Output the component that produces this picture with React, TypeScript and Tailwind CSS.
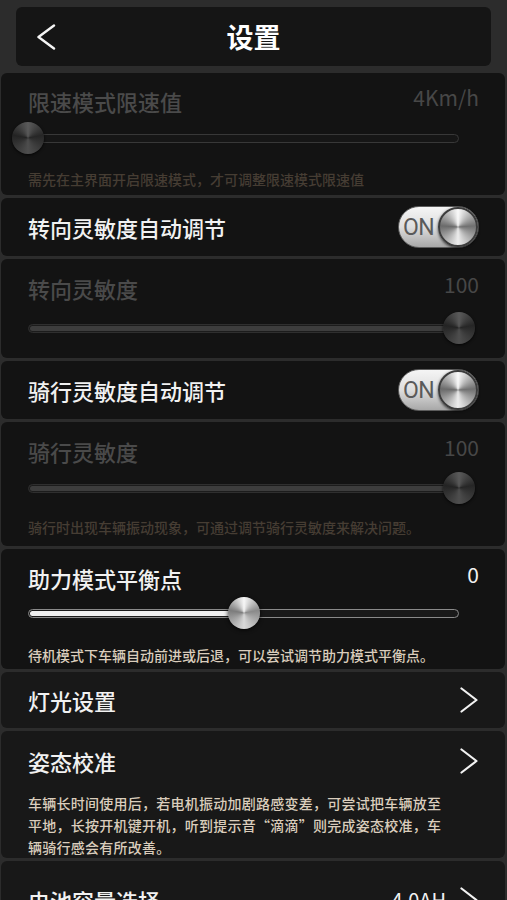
import React from "react";

type SliderProps = {
  fill: string;
  trackBg: string;
  trackBorder: string;
  thumbLeft: string;
  thumb: string;
};

function Slider({ fill, trackBg, trackBorder, thumbLeft, thumb }: SliderProps) {
  return (
    <div className="relative w-[431px] h-[32px] flex items-center">
      <div className={`w-full h-[9px] rounded-full border ${trackBorder} ${trackBg} p-[1px] flex`}>
        <div className={`h-full rounded-full ${fill}`} />
      </div>
      <div className={`absolute top-0 ${thumbLeft} -translate-x-1/2 w-[32px] h-[32px] rounded-full ${thumb}`} />
    </div>
  );
}

const thumbOn =
  "bg-[conic-gradient(#f7f7f7,#8a8a8a_22%,#d9d9d9_50%,#7c7c7c_78%,#f7f7f7)] shadow-[0_1px_4px_rgba(0,0,0,0.8)]";
const thumbOff =
  "bg-[conic-gradient(#5a5a5a,#262626_22%,#4e4e4e_50%,#232323_78%,#5a5a5a)] shadow-[0_1px_3px_rgba(0,0,0,0.8)]";

function Toggle() {
  return (
    <div className="w-[81px] h-[42px] shrink-0 rounded-full bg-linear-to-b from-[#f5f5f5] via-[#dedede] to-[#a8a8a8] border border-[#5c5c5c] flex items-center justify-between">
      <span className="pl-[4px] font-['Roboto',sans-serif] text-[23px] leading-none text-[#5a5a5a] tracking-[-0.5px]">
        ON
      </span>
      <div className="w-[40px] h-[40px] rounded-full border-2 border-[#3c3c3c] bg-[conic-gradient(#fafafa,#707070_24%,#ededed_50%,#6a6a6a_76%,#fafafa)] shadow-[0_1px_3px_rgba(0,0,0,0.7)]" />
    </div>
  );
}

function Chevron() {
  return (
    <svg width="18" height="26" viewBox="0 0 18 26" fill="none">
      <polyline points="1.5,1.5 16.5,13 1.5,24.5" stroke="#f2f2f2" strokeWidth="2.2" strokeLinecap="round" strokeLinejoin="round" />
    </svg>
  );
}

const card = "ml-[1px] mr-[2px] rounded-md bg-[#131313] pl-[27px] pr-[26px]";
const labelOn = "text-[22px] leading-[28px] font-medium text-[#f1f1f1]";
const labelOff = "text-[22px] leading-[28px] font-medium text-[#4a4a4a]";
const valueOff = "text-[21px] leading-[20px] text-[#474747]";
const valueOn = "text-[21px] leading-[20px] text-[#f1f1f1]";
const hintOff = "text-[14px] leading-[20px] font-medium text-[#463d33]";
const hintOn = "text-[14px] leading-[20px] font-medium text-[#dacdbc]";

export default function App() {
  return (
    <div className="w-full h-[900px] overflow-hidden bg-[#2c2c2c] pt-[7px] font-['Noto_Sans_CJK_SC','Noto_Sans',sans-serif]">
      <div className="mx-4 h-[59px] rounded-md bg-[#151515] grid grid-cols-[70px_1fr_70px] items-center">
        <div className="pl-[21px] flex items-center">
          <svg width="19" height="26" viewBox="0 0 19 26" fill="none">
            <polyline points="17,1.5 1.5,13 17,24.5" stroke="#f5f5f5" strokeWidth="2.4" strokeLinecap="round" strokeLinejoin="round" />
          </svg>
        </div>
        <div className="text-center text-[27px] font-bold text-white leading-none">设置</div>
        <div />
      </div>

      <div className="mt-[7px] flex flex-col gap-[3px]">
        {/* Card 1 */}
        <div className={`${card} pt-[14px] pb-[6px] flex flex-col`}>
          <div className="flex justify-between items-start">
            <span className={labelOff}>限速模式限速值</span>
            <span className={valueOff}>4Km/h</span>
          </div>
          <div className="mt-[7px]">
            <Slider fill="w-0 bg-[#3a3a3a]" trackBg="bg-[#161616]" trackBorder="border-[#383838]" thumbLeft="left-0" thumb={thumbOff} />
          </div>
          <div className={`mt-[15px] ${hintOff}`}>需先在主界面开启限速模式，才可调整限速模式限速值</div>
        </div>

        {/* Card 2 */}
        <div className={`${card} h-[58px] shrink-0 flex items-center justify-between`}>
          <span className={labelOn}>转向灵敏度自动调节</span>
          <Toggle />
        </div>

        {/* Card 3 */}
        <div className={`${card} pt-[15px] pb-[14px] flex flex-col`}>
          <div className="flex justify-between items-start">
            <span className={labelOff}>转向灵敏度</span>
            <span className={valueOff}>100</span>
          </div>
          <div className="mt-[10px]">
            <Slider fill="w-full bg-[#3d3d3d]" trackBg="bg-[#1c1c1c]" trackBorder="border-[#2f2f2f]" thumbLeft="left-full" thumb={thumbOff} />
          </div>
        </div>

        {/* Card 4 */}
        <div className={`${card} h-[58px] shrink-0 flex items-center justify-between`}>
          <span className={labelOn}>骑行灵敏度自动调节</span>
          <Toggle />
        </div>

        {/* Card 5 */}
        <div className={`${card} pt-[15px] pb-[9px] flex flex-col`}>
          <div className="flex justify-between items-start">
            <span className={labelOff}>骑行灵敏度</span>
            <span className={valueOff}>100</span>
          </div>
          <div className="mt-[7px]">
            <Slider fill="w-full bg-[#3d3d3d]" trackBg="bg-[#1c1c1c]" trackBorder="border-[#2f2f2f]" thumbLeft="left-full" thumb={thumbOff} />
          </div>
          <div className={`mt-[13px] ${hintOff}`}>骑行时出现车辆振动现象，可通过调节骑行灵敏度来解决问题。</div>
        </div>

        {/* Card 6 */}
        <div className={`${card} pt-[15px] pb-[4px] flex flex-col`}>
          <div className="flex justify-between items-start">
            <span className={labelOn}>助力模式平衡点</span>
            <span className={valueOn}>0</span>
          </div>
          <div className="mt-[5px]">
            <Slider fill="w-1/2 bg-[#efefef]" trackBg="bg-[#191919]" trackBorder="border-[#8a8a8a]" thumbLeft="left-1/2" thumb={thumbOn} />
          </div>
          <div className={`mt-[16px] ${hintOn}`}>待机模式下车辆自动前进或后退，可以尝试调节助力模式平衡点。</div>
        </div>

        {/* Card 7 */}
        <div className={`${card} h-[56px] shrink-0 flex items-center justify-between bg-[#181818]`}>
          <span className={labelOn}>灯光设置</span>
          <div className="pr-[1px]">
            <Chevron />
          </div>
        </div>

        {/* Card 8 */}
        <div className={`${card} pt-[16px] pb-0 flex flex-col bg-[#181818]`}>
          <div className="flex justify-between items-center">
            <span className={labelOn}>姿态校准</span>
            <div className="pr-[1px]">
              <Chevron />
            </div>
          </div>
          <div className="mt-[17px] text-[14px] leading-[22px] font-medium text-[#dacdbc] tracking-[0.25px]">
            车辆长时间使用后，若电机振动加剧路感变差，可尝试把车辆放至
            <br />
            平地，长按开机键开机，听到提示音“滴滴”则完成姿态校准，车
            <br />
            辆骑行感会有所改善。
          </div>
        </div>

        {/* Card 9 */}
        <div className={`${card} pt-[25px] h-[90px] shrink-0 flex flex-col bg-[#181818]`}>
          <div className="flex justify-between items-center">
            <span className={labelOn}>电池容量选择</span>
            <div className="flex items-center gap-[14px] pr-[1px]">
              <span className="text-[20px] text-[#f1f1f1] leading-none">4.0AH</span>
              <Chevron />
            </div>
          </div>
        </div>
      </div>
    </div>
  );
}
